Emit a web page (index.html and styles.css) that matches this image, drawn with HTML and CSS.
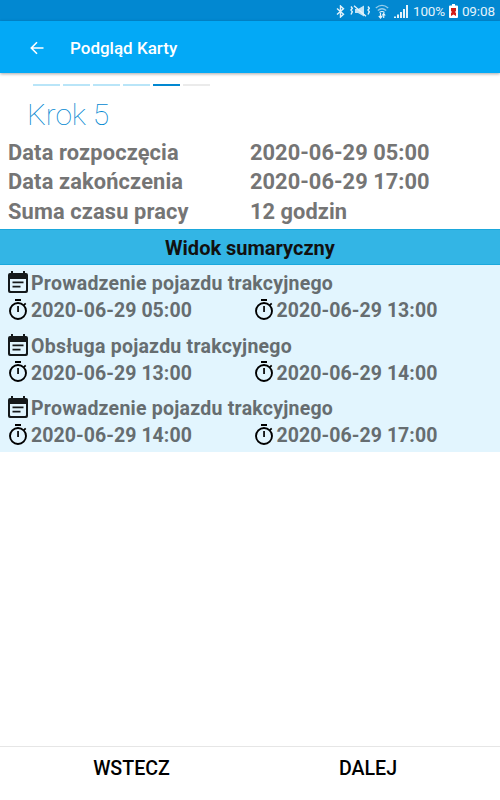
FILE: index.html
```
<!DOCTYPE html>
<html lang="pl">
<head>
    <meta charset="UTF-8">
    <meta name="viewport" content="width=device-width, initial-scale=1.0">
    <title>Podgląd Karty</title>
    <link rel="stylesheet" href="styles.css">
</head>
<body>
    <!-- shared icons -->
    <svg class="icon-defs">
        <symbol id="event" viewBox="0 0 20 22">
            <path d="M3 0h2v2h10V0h2v2h1q2 0 2 2v16q0 2-2 2H2q-2 0-2-2V4q0-2 2-2h1zM2 8v11q0 1 1 1h14q1 0 1-1V8z" fill-rule="evenodd"/>
            <path d="M4.500 10.500h11V12.200h-11zM4.500 14.800h8v1.700h-8z"/>
        </symbol>
        <symbol id="timer" viewBox="0 0 18 21">
            <circle cx="9" cy="12" r="8" fill="none" stroke="#000" stroke-width="1.900"/>
            <path d="M6 0h6v1.900H6zM8.200 7h1.700v6H8.200zM14.300 5.500l1.800-1.800 1.200 1.200-1.800 1.800z"/>
        </symbol>
    </svg>

    <div class="status-bar">
        <svg class="bluetooth" width="9" height="13" viewBox="0 0 9 13">
            <path d="M1 3.5L7.5 9.2 4.5 12V1l3 2.8L1 9.5" fill="none" stroke="currentColor" stroke-width="1.4"/>
        </svg>
        <svg class="mute" width="20" height="12" viewBox="0 0 20 12">
            <path d="M5 4h3l6-3.500v11L8 8H5z" fill="currentColor" opacity=".85"/>
            <path d="M4 .8l12 10.4M1 1.500l1.300 1.700L1 5l1.300 1.800L1 9.500M18 1.500l1.300 1.700L18 5l1.300 1.800L18 9.500" fill="none" stroke="currentColor" stroke-width="1.4"/>
        </svg>
        <svg class="wifi" width="14" height="15" viewBox="0 0 14 15">
            <path d="M.8 4Q7-1.2 13.2 4M2.8 6.5Q7 3 11.2 6.5" fill="none" stroke="currentColor" stroke-width="1.4" opacity=".65"/>
            <path d="M4.500 8.500Q7 6.500 9.500 8.500M5.500 14V9M3.800 12l1.700 2 1.700-2M8.700 14V9.500M7.200 11.500l1.500-2 1.500 2" fill="none" stroke="currentColor" stroke-width="1.2"/>
        </svg>
        <svg class="signal" width="14" height="13" viewBox="0 0 14 13">
            <path d="M0 11.500h2V13H0zM3 9.500h2V13H3zM6 7h2v6H6zM9 4h2v9H9zM12 0h2v13h-2z" fill="currentColor"/>
        </svg>
        <span class="percent">100%</span>
        <svg class="battery" width="9" height="14" viewBox="0 0 9 14">
            <path d="M3 0h3v1.5h2q1 0 1 1V13q0 1-1 1H1q-1 0-1-1V2.500q0-1 1-1h2z" fill="#fff"/>
            <path d="M2 4h5v3L6 8l1 1v3L4.500 10.500 2 12V9l1-1-1-1z" fill="#d21f18"/>
        </svg>
        <span class="clock">09:08</span>
    </div>

    <div class="app-bar">
        <svg class="back" width="14" height="14" viewBox="0 0 14 14">
            <path d="M13.500 7H1.500M7 1.200L1.300 7 7 12.800" fill="none" stroke="currentColor" stroke-width="1.600"/>
        </svg>
        <span class="title">Podgląd Karty</span>
    </div>

    <div class="steps">
        <div class="step done"></div>
        <div class="step done"></div>
        <div class="step done"></div>
        <div class="step done"></div>
        <div class="step current"></div>
        <div class="step"></div>
    </div>
    <h1>Krok 5</h1>

    <div class="summary">
        <span class="label">Data rozpoczęcia</span><span>2020-06-29 05:00</span>
        <span class="label">Data zakończenia</span><span>2020-06-29 17:00</span>
        <span class="label">Suma czasu pracy</span><span>12 godzin</span>
    </div>

    <h2>Widok sumaryczny</h2>

    <div class="entries">
        <div class="entry">
            <div class="name"><svg class="event"><use href="#event"/></svg>Prowadzenie pojazdu trakcyjnego</div>
            <div class="times">
                <div class="time"><svg class="timer"><use href="#timer"/></svg>2020-06-29 05:00</div>
                <div class="time"><svg class="timer"><use href="#timer"/></svg>2020-06-29 13:00</div>
            </div>
        </div>
        <div class="entry">
            <div class="name"><svg class="event"><use href="#event"/></svg>Obsługa pojazdu trakcyjnego</div>
            <div class="times">
                <div class="time"><svg class="timer"><use href="#timer"/></svg>2020-06-29 13:00</div>
                <div class="time"><svg class="timer"><use href="#timer"/></svg>2020-06-29 14:00</div>
            </div>
        </div>
        <div class="entry">
            <div class="name"><svg class="event"><use href="#event"/></svg>Prowadzenie pojazdu trakcyjnego</div>
            <div class="times">
                <div class="time"><svg class="timer"><use href="#timer"/></svg>2020-06-29 14:00</div>
                <div class="time"><svg class="timer"><use href="#timer"/></svg>2020-06-29 17:00</div>
            </div>
        </div>
    </div>

    <div class="footer">
        <button class="prev">WSTECZ</button>
        <button class="next">DALEJ</button>
    </div>
</body>
</html>
```
FILE: styles.css
```
* {
    box-sizing: border-box;
}
body {
    margin: 0;
    height: 800px;
    display: flex;
    flex-direction: column;
    font-family: Roboto, sans-serif;
    background-color: #fff;
    overflow: hidden;
}
svg {
    flex: none;
}
.icon-defs {
    display: none;
}
.status-bar {
    height: 21px;
    flex: none;
    display: flex;
    align-items: center;
    justify-content: flex-end;
    padding: 1px 5px 0 0;
    background-color: #0288d1;
    color: #e4f3fb;
    font-size: 13.5px;
}
.mute {
    margin-left: 5px;
}
.wifi {
    margin-left: 5px;
}
.signal {
    margin-left: 5px;
}
.percent {
    margin-left: 5px;
    letter-spacing: -0.2px;
}
.battery {
    margin: 0 4px 0 4px;
}
.clock {
    letter-spacing: -0.1px;
}
.app-bar {
    height: 52px;
    flex: none;
    display: flex;
    align-items: center;
    padding: 1px 0 0 30px;
    background-color: #03a9f6;
    color: #fff;
    box-shadow: 0 1px 3px rgba(0,0,0,0.35);
}
.title {
    margin-left: 26px;
    font-size: 17px;
    font-weight: 500;
}
.steps {
    display: flex;
    gap: 3px;
    padding: 11px 0 0 33px;
}
.step {
    width: 27px;
    height: 2px;
    background-color: #ebebeb;
}
.done {
    background-color: #b9e5f8;
}
.current {
    background-color: #0288d1;
}
h1 {
    margin: 11px 0 0 27px;
    font-size: 30px;
    line-height: 36px;
    font-weight: 100;
    letter-spacing: -0.2px;
    color: #0288d1;
}
.summary {
    display: grid;
    grid-template-columns: 242px 1fr;
    padding: 5px 0 0 8px;
    font-size: 21.8px;
    line-height: 29.4px;
    font-weight: bold;
    letter-spacing: 0.05px;
    color: #757575;
}
.label {
    letter-spacing: 0.14px;
}
h2 {
    margin: 3px 0 0;
    height: 36px;
    flex: none;
    line-height: 36px;
    font-size: 20px;
    text-align: center;
    color: #111;
    background-color: #33b5e5;
    border-top: 1px solid #1ba8dc;
    border-bottom: 1px solid #1ba8dc;
}
.entries {
    height: 187px;
    flex: none;
    padding: 5.2px 0 0 8px;
    background-color: #e2f5fe;
    color: #666d70;
    font-size: 19.5px;
    font-weight: bold;
    letter-spacing: 0.06px;
}
.entry {
    height: 62.5px;
}
.name, .time {
    display: flex;
    align-items: center;
    height: 27px;
}
.name {
    letter-spacing: 0.24px;
}
.times {
    display: flex;
}
.time {
    width: 245.5px;
}
.event {
    width: 20px;
    height: 22px;
    margin: 0 3px 3px 0;
    fill: #15191b;
}
.timer {
    width: 18px;
    height: 21px;
    margin: 0 4px 3px 1px;
    fill: #000;
}
.footer {
    display: flex;
    height: 54px;
    flex: none;
    margin-top: auto;
    border-top: 1px solid #e6e6e6;
}
button {
    height: 42px;
    padding: 0;
    border: none;
    background: none;
    font-family: inherit;
    font-size: 19.6px;
    font-weight: 500;
    color: #000;
}
.prev {
    width: 263px;
}
.next {
    width: 210px;
}
```
